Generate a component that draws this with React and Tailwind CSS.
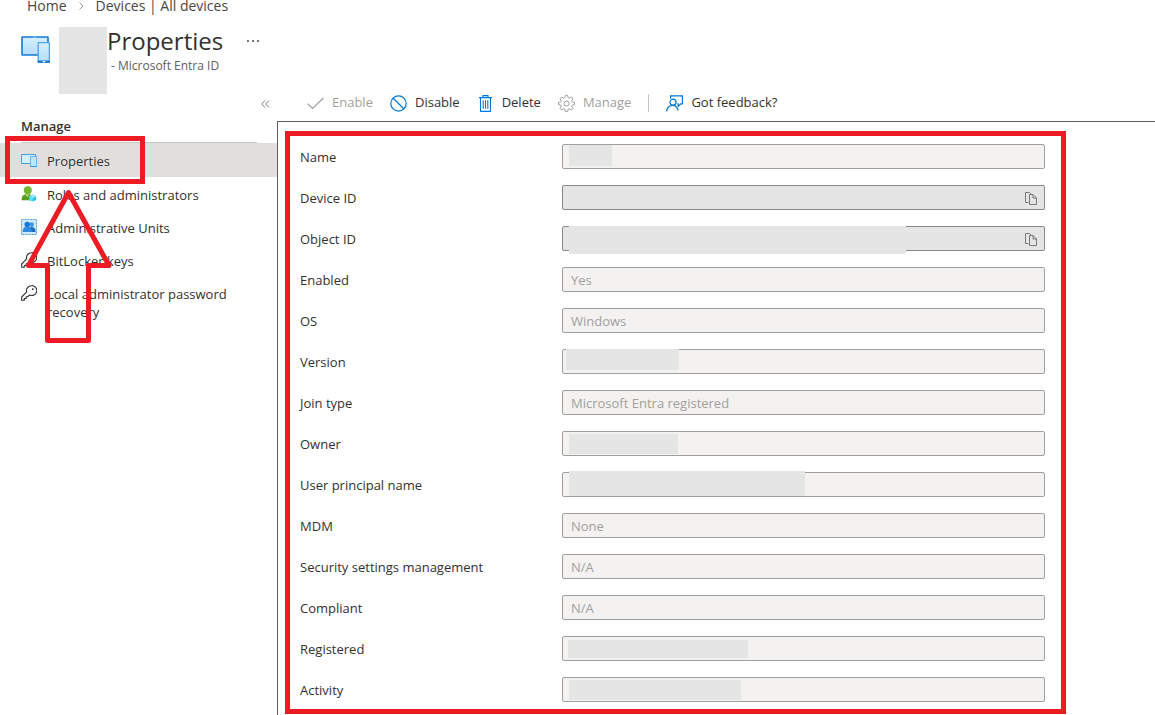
import { clsx } from 'clsx'

const FIELDS = [
  { id: 'name', label: 'Name', mask: 'left-[7px] top-px w-[43px] h-[21px]' },
  { id: 'device-id', label: 'Device ID', copyable: true },
  { id: 'object-id', label: 'Object ID', copyable: true, mask: 'left-[7px] top-0 w-[337px] h-7' },
  { id: 'enabled', label: 'Enabled', value: 'Yes' },
  { id: 'os', label: 'OS', value: 'Windows' },
  { id: 'version', label: 'Version', mask: 'left-[4px] top-0 w-[113px] h-[21px]' },
  { id: 'join-type', label: 'Join type', value: 'Microsoft Entra registered' },
  { id: 'owner', label: 'Owner', mask: 'left-[7px] top-[3px] w-[109px] h-5' },
  { id: 'upn', label: 'User principal name', mask: 'left-[7px] -top-px w-[236px] h-[25px]' },
  { id: 'mdm', label: 'MDM', value: 'None' },
  { id: 'security', label: 'Security settings management', value: 'N/A' },
  { id: 'compliant', label: 'Compliant', value: 'N/A' },
  { id: 'registered', label: 'Registered', mask: 'left-[6px] top-[4px] w-[180px] h-[18px]' },
  { id: 'activity', label: 'Activity', mask: 'left-[7px] top-[3px] w-[172px] h-5' },
]

const DevicesIcon = ({ className }) => (
  <svg viewBox="0 0 30 28" className={className} fill="none" aria-hidden="true">
    <defs>
      <linearGradient id="screen" x1="0" y1="0" x2="0" y2="1">
        <stop offset="0" stopColor="#d6f0fb" />
        <stop offset="1" stopColor="#b4dcfb" />
      </linearGradient>
    </defs>
    <rect x="1" y="1" width="26" height="18" rx="0.5" fill="url(#screen)" stroke="#1479d2" strokeWidth="1.6" />
    <path d="M12 1h3" stroke="#7cc4f5" strokeWidth="1.2" />
    <rect x="17.2" y="6.6" width="11.2" height="19.8" rx="0.6" fill="url(#screen)" stroke="#4fa3f0" strokeWidth="1.3" />
    <path d="M16.600 25.600h12.400" stroke="#1479d2" strokeWidth="2.2" />
    <path d="M21.600 25.600h2.600" stroke="#fff" strokeWidth="1.2" />
  </svg>
)

const SmallDevicesIcon = () => (
  <svg viewBox="0 0 16 16" className="w-4 h-4" fill="none" aria-hidden="true">
    <path d="M0.500 2.500h14v9h-14z" fill="#d3effb" stroke="#4a9fdd" />
    <rect x="9.500" y="4.500" width="6" height="10" fill="#c4e6fb" stroke="#6ab1ee" />
    <path d="M9.500 14.500h6" stroke="#3b8fd8" />
  </svg>
)

const RolesIcon = () => (
  <svg viewBox="0 0 16 16" className="w-4 h-4" aria-hidden="true">
    <path d="M0.600 14.200c0-4 1.600-6.200 5.800-6.200s5.400 2 5.600 6.200z" fill="#5a9e1a" />
    <path d="M4.200 8.200 6.400 11.200l2.200-3z" fill="#b9dd7c" />
    <circle cx="6.800" cy="4.200" r="4" fill="#74b62e" />
    <path d="m11.800 8.600 3.400 1.700v3.600l-3.400 1.700-3.400-1.700v-3.600z" fill="#32bedd" />
    <path d="m11.800 8.600 3.400 1.700-3.400 1.700-3.400-1.700z" fill="#9cebff" />
    <path d="M11.800 12v3.600l-3.400-1.700v-3.600z" fill="#50e6ff" />
  </svg>
)

const UnitsIcon = () => (
  <svg viewBox="0 0 16 16" className="w-4 h-4" aria-hidden="true">
    <rect x="0.500" y="0.500" width="15" height="15" fill="#cfe9fa" stroke="#4d9fe0" strokeDasharray="2 1" />
    <circle cx="10.600" cy="5.600" r="2.400" fill="#3f95e2" />
    <path d="M6.600 13c0-3.200 1.400-5 4-5s4 1.800 4 5z" fill="#1b6ec2" />
    <circle cx="6.200" cy="5.400" r="2.700" fill="#1277d4" />
    <path d="M1.600 13c0-3.400 1.600-5.200 4.600-5.200s4.600 1.800 4.600 5.200z" fill="#2f8be0" />
  </svg>
)

const KeyIcon = () => (
  <svg viewBox="0 0 16 16" className="w-4 h-4" fill="none" stroke="#323130" strokeWidth="1.1" strokeLinejoin="round" aria-hidden="true">
    <path d="M10.400 0.700a4.900 4.900 0 0 0-4.700 6.200L0.700 12v3.300h2.600v-1.800h1.800v-1.800h1.800l1.700-1.800a4.900 4.900 0 1 0 1.800-9.200z" />
    <circle cx="11.800" cy="4.200" r="0.900" fill="#323130" stroke="none" />
  </svg>
)

const CopyIcon = () => (
  <svg viewBox="0 0 12 13" className="w-3 h-[13px]" fill="none" stroke="#7a7876" aria-hidden="true">
    <path d="M3.500 10.500h-3V0.500h4l2 2" />
    <path d="M4.500 2.500h3.500l3.500 3.500v6.500h-7z" />
    <path d="M8 2.500v3.500h3.500" />
  </svg>
)

const CheckIcon = () => (
  <svg viewBox="0 0 17 17" className="w-[17px] h-[17px]" fill="none" stroke="#a19f9d" strokeWidth="1.2" aria-hidden="true">
    <path d="m0.600 8.600 5 4.800L16.400 3" />
  </svg>
)

const BlockIcon = () => (
  <svg viewBox="0 0 17 17" className="w-[17px] h-[17px]" fill="none" stroke="#0078d4" strokeWidth="1.2" aria-hidden="true">
    <circle cx="8.500" cy="8.500" r="7.700" />
    <path d="m3 3 11 11" />
  </svg>
)

const TrashIcon = () => (
  <svg viewBox="0 0 17 17" className="w-[17px] h-[17px]" fill="none" stroke="#0078d4" strokeWidth="1.1" aria-hidden="true">
    <path d="M2 2.600h13M6 2.400V0.600h5v1.800M3.500 2.800v13.600h10V2.800" />
    <path d="M6.200 5.200v8.600M8.500 5.200v8.600M10.800 5.200v8.600" />
  </svg>
)

const GearIcon = () => (
  <svg viewBox="0 0 17 17" className="w-[17px] h-[17px]" fill="none" stroke="#a19f9d" strokeLinejoin="round" aria-hidden="true">
    <path d="M7.300 0.600h2.400l.4 2.100 1.300.6 1.900-1.300 1.700 1.700-1.300 1.900.6 1.300 2.100.4v2.400l-2.100.4-.6 1.300 1.300 1.900-1.700 1.700-1.900-1.300-1.300.6-.4 2.100H7.300l-.4-2.100-1.300-.6L3.700 15 2 13.300l1.300-1.900-.6-1.300-2.100-.4V7.300l2.100-.4.6-1.300L2 3.700 3.700 2l1.900 1.300 1.300-.6z" />
    <circle cx="8.500" cy="8.500" r="2.500" />
  </svg>
)

const FeedbackIcon = () => (
  <svg viewBox="0 0 17 17" className="w-[17px] h-[17px]" fill="none" stroke="#0078d4" strokeWidth="1.2" aria-hidden="true">
    <path d="M4.600 3.500V0.800h11.800v8h-1.600l-2.600 2.600V8.800h-1" />
    <circle cx="7" cy="7.200" r="3" />
    <path d="M0.700 16.500c.2-3.800 2.600-6.200 6.300-6.200 2.600 0 4.400 2.200 5.200 5.200" />
  </svg>
)

const NAV_ITEMS = [
  { label: 'Properties', icon: <SmallDevicesIcon />, active: true },
  { label: 'Roles and administrators', icon: <RolesIcon /> },
  { label: 'Administrative Units', icon: <UnitsIcon /> },
  { label: 'BitLocker keys', icon: <KeyIcon /> },
  { label: 'Local administrator password recovery', icon: <KeyIcon /> },
]

const ToolbarButton = ({ icon, disabled, children }) => (
  <button
    type="button"
    disabled={disabled}
    className={clsx('flex items-center gap-2 whitespace-nowrap', disabled ? 'text-[#a19f9d]' : 'text-[#323130]')}
  >
    {icon}
    {children}
  </button>
)

const Header = () => (
  <header>
    <nav aria-label="Breadcrumb" className="h-[27px] pl-[27px] flex items-start gap-3 text-sm leading-[12px] text-[#484644]">
      <a href="#home">Home</a>
      <svg viewBox="0 0 5 8" className="w-[5px] h-2 mt-[2px]" fill="none" stroke="#a19f9d" aria-hidden="true">
        <path d="m0.500 0.500 3.500 3.500-3.500 3.500" />
      </svg>
      <a href="#devices">Devices | All devices</a>
    </nav>

    <div className="flex items-start pl-[21px]">
      <DevicesIcon className="w-[30px] h-7 mt-[9px]" />
      <div className="w-12 h-[67px] ml-2 bg-[#e5e5e5]" />
      <div>
        <div className="flex items-center gap-6">
          <h1 className="text-2xl leading-7 text-[#323130]">Properties</h1>
          <button type="button" aria-label="More" className="flex gap-[3px]">
            <span className="w-[2px] h-[2px] bg-[#797775]" />
            <span className="w-[2px] h-[2px] bg-[#797775]" />
            <span className="w-[2px] h-[2px] bg-[#797775]" />
          </button>
        </div>
        <p className="pl-1 pt-[2px] text-xs leading-[18px] text-[#605e5c]">- Microsoft Entra ID</p>
      </div>
    </div>
  </header>
)

const Sidebar = () => (
  <aside className="relative w-[277px] shrink-0">
    <div className="h-5 pr-[7px] flex items-center justify-end">
      <button type="button" aria-label="Collapse menu">
        <svg viewBox="0 0 9 8" className="w-[9px] h-2" fill="none" stroke="#797775" aria-hidden="true">
          <path d="M4 0.500 0.700 4 4 7.500M8 0.500 4.700 4 8 7.500" />
        </svg>
      </button>
    </div>
    <h2 className="h-[29px] ml-[21px] mr-5 border-b border-[#c8c6c4] font-semibold leading-6">Manage</h2>

    <ul>
      {NAV_ITEMS.map((item) => (
        <li key={item.label} className="relative">
          <a
            href="#"
            aria-current={item.active ? 'page' : undefined}
            className={clsx(
              'flex items-start gap-[10px] pl-[21px] pr-8 pt-[9px] leading-[18px]',
              item.active ? 'pb-[7px] bg-[#e1dfdd]' : 'pb-[6px]'
            )}
          >
            <span className="w-4 h-4 shrink-0">{item.icon}</span>
            {item.label}
          </a>
          {item.active && (
            <div className="absolute left-[5px] -top-[7px] w-[140px] h-12 border-5 border-[#ed1c24] pointer-events-none" />
          )}
        </li>
      ))}
    </ul>

    {/* Arrow pointing at the selected menu item */}
    <svg
      viewBox="0 0 88 158"
      className="absolute left-6 top-[92px] w-[88px] h-[158px] pointer-events-none"
      fill="none"
      stroke="#ed1c24"
      strokeWidth="5"
      strokeLinejoin="round"
      aria-hidden="true"
    >
      <path d="M44.500 6.500 85 79.500H64.500V154.500H23.500V79.500H4.500z" />
    </svg>
  </aside>
)

const Field = ({ id, label, value = '', copyable, mask }) => (
  <div className="grid grid-cols-[262px_1fr] items-center">
    <label htmlFor={id} className="pt-px leading-5">{label}</label>
    <div className="relative flex">
      <input
        id={id}
        type="text"
        value={value}
        readOnly
        disabled={!copyable}
        className={clsx(
          'w-full h-[25px] px-2 border rounded-[2px]',
          copyable ? 'bg-[#e5e5e5] border-[#8a8886]' : 'bg-[#f3f2f1] border-[#a19f9d] text-[#a19f9d]'
        )}
      />
      {mask && <div className={clsx('absolute bg-[#e5e5e5]', mask)} />}
      {copyable && (
        <button type="button" aria-label={`Copy ${label}`} className="absolute right-2 top-[7px]">
          <CopyIcon />
        </button>
      )}
    </div>
  </div>
)

const App = () => {
  return (
    <div className="min-h-screen flex flex-col bg-white font-['Open_Sans','Noto_Sans',sans-serif] text-[13px] text-[#323130]">
      <Header />
      <div className="flex flex-1">
        <Sidebar />
        <main className="flex-1 min-w-0 flex flex-col">
          <div className="h-[18px] mb-[9px] pl-[30px] flex items-center gap-[17px]">
            <ToolbarButton icon={<CheckIcon />} disabled>Enable</ToolbarButton>
            <ToolbarButton icon={<BlockIcon />}>Disable</ToolbarButton>
            <ToolbarButton icon={<TrashIcon />}>Delete</ToolbarButton>
            <ToolbarButton icon={<GearIcon />} disabled>Manage</ToolbarButton>
            <div className="w-px h-[18px] bg-[#c8c6c4]" />
            <ToolbarButton icon={<FeedbackIcon />}>Got feedback?</ToolbarButton>
          </div>

          <div className="flex-1 border-t border-l border-[#605e5c] pl-[7px] pt-[9px]">
            <form className="w-full max-w-[781px] flex flex-col gap-4 border-5 border-[#ed1c24] pt-2 pb-[7px] pl-[10px] pr-4">
              {FIELDS.map((field) => (
                <Field key={field.id} {...field} />
              ))}
            </form>
          </div>
        </main>
      </div>
    </div>
  )
}

export default App
